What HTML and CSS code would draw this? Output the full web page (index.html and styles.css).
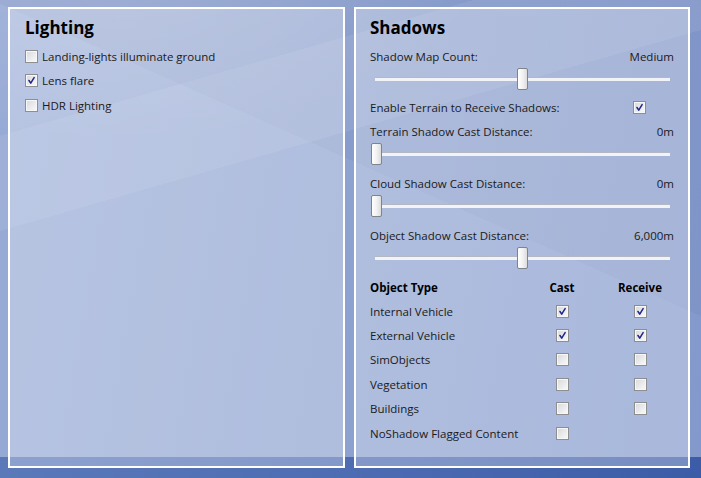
FILE: index.html
```html
<!DOCTYPE html>
<html>
<head>
<meta charset="utf-8">
<link rel="stylesheet" href="styles.css">
</head>
<body>
<div class="screen">
  <div class="swoosh"></div>
  <div class="band"></div>
  <div class="panels">
    <section class="panel lighting">
      <h2 class="title">Lighting</h2>
      <div class="check-row"><span class="cb"></span><span>Landing-lights illuminate ground</span></div>
      <div class="check-row"><span class="cb on"><svg viewBox="0 0 13 13"><path d="M3.5 6.5 L5.6 9.6 L9.6 3" /></svg></span><span>Lens flare</span></div>
      <div class="check-row"><span class="cb"></span><span>HDR Lighting</span></div>
    </section>
    <section class="panel shadows">
      <h2 class="title">Shadows</h2>
      <div class="label-row"><span>Shadow Map Count:</span><span>Medium</span></div>
      <div class="slider"><div class="track"></div><div class="thumb" style="left:147px"></div></div>
      <div class="label-row terrain"><span>Enable Terrain to Receive Shadows:</span><span class="cb on"><svg viewBox="0 0 13 13"><path d="M3.5 6.5 L5.6 9.6 L9.6 3" /></svg></span></div>
      <div class="label-row"><span>Terrain Shadow Cast Distance:</span><span>0m</span></div>
      <div class="slider"><div class="track"></div><div class="thumb" style="left:1px"></div></div>
      <div class="label-row"><span>Cloud Shadow Cast Distance:</span><span>0m</span></div>
      <div class="slider"><div class="track"></div><div class="thumb" style="left:1px"></div></div>
      <div class="label-row"><span>Object Shadow Cast Distance:</span><span>6,000m</span></div>
      <div class="slider"><div class="track"></div><div class="thumb" style="left:147px"></div></div>
      <div class="table">
        <div class="trow head"><span class="name">Object Type</span><span class="col">Cast</span><span class="col">Receive</span></div>
        <div class="trow"><span class="name">Internal Vehicle</span><span class="col"><span class="cb on"><svg viewBox="0 0 13 13"><path d="M3.5 6.5 L5.6 9.6 L9.6 3" /></svg></span></span><span class="col"><span class="cb on"><svg viewBox="0 0 13 13"><path d="M3.5 6.5 L5.6 9.6 L9.6 3" /></svg></span></span></div>
        <div class="trow"><span class="name">External Vehicle</span><span class="col"><span class="cb on"><svg viewBox="0 0 13 13"><path d="M3.5 6.5 L5.6 9.6 L9.6 3" /></svg></span></span><span class="col"><span class="cb on"><svg viewBox="0 0 13 13"><path d="M3.5 6.5 L5.6 9.6 L9.6 3" /></svg></span></span></div>
        <div class="trow"><span class="name">SimObjects</span><span class="col"><span class="cb"></span></span><span class="col"><span class="cb"></span></span></div>
        <div class="trow"><span class="name">Vegetation</span><span class="col"><span class="cb"></span></span><span class="col"><span class="cb"></span></span></div>
        <div class="trow"><span class="name">Buildings</span><span class="col"><span class="cb"></span></span><span class="col"><span class="cb"></span></span></div>
        <div class="trow"><span class="name">NoShadow Flagged Content</span><span class="col"><span class="cb"></span></span><span class="col"></span></div>
      </div>
    </section>
  </div>
</div>
</body>
</html>
```
FILE: styles.css
```css
* { box-sizing: border-box; }
html, body { margin: 0; padding: 0; }
body {
  width: 701px;
  height: 478px;
  overflow: hidden;
  font-family: "Open Sans", "Noto Sans", sans-serif;
  font-size: 11.5px;
  color: #1a1a1a;
}
.screen {
  position: relative;
  width: 701px;
  height: 478px;
  background:
    radial-gradient(ellipse 520px 260px at 120px -40px, rgba(255,255,255,0.16), rgba(255,255,255,0) 70%),
    linear-gradient(100deg, #98abd6 0%, #8ea2d0 50%, #8399cc 100%);
  overflow: hidden;
}
.swoosh {
  position: absolute;
  left: 0; top: 0; right: 0; bottom: 0;
  background:
    linear-gradient(-16deg, rgba(255,255,255,0) 0 66%, rgba(255,255,255,0.07) 66% 80%, rgba(255,255,255,0) 80%),
    linear-gradient(24deg, rgba(0,20,80,0) 0 60%, rgba(0,20,80,0.04) 60%);
}
.band {
  position: absolute;
  left: 0; right: 0; bottom: 0;
  height: 21px;
  background: linear-gradient(90deg, #5b79b9 0%, #4d6cb2 50%, #3c5ca7 100%);
}
.panels {
  position: relative;
  display: flex;
  gap: 9px;
  padding: 7px 0 0 8px;
}
.panel {
  height: 461px;
  border: 2px solid #fff;
  background: rgba(255,255,255,0.3);
}
.lighting { width: 337px; padding: 8px 14px 0 15px; }
.shadows { width: 336px; padding: 8px 14px 0 14px; }
.title {
  margin: 0;
  font-size: 17px;
  font-weight: 700;
  line-height: 22px;
  height: 27px;
  color: #000;
}
.check-row {
  display: flex;
  align-items: center;
  gap: 4px;
  height: 24.5px;
}
.cb {
  position: relative;
  display: inline-block;
  flex: none;
  width: 13px;
  height: 13px;
  border: 1px solid #8c8e91;
  background: linear-gradient(135deg, #d6d8db 0%, #f4f4f4 80%);
  box-shadow: inset 0 0 0 1px #f7f7f7;
}
.cb svg {
  position: absolute;
  left: 0; top: 0;
  width: 11px; height: 11px;
}
.cb svg path {
  fill: none;
  stroke: #21258a;
  stroke-width: 1.8;
  stroke-linecap: round;
  stroke-linejoin: round;
}
.label-row {
  display: flex;
  justify-content: space-between;
  align-items: center;
  height: 24px;
}
.label-row.terrain { height: 23px; padding-right: 28px; }
.slider {
  position: relative;
  height: 28px;
}
.track {
  position: absolute;
  left: 5px; right: 4px; top: 9px;
  height: 4px;
  border-top: 1px solid #b3b8c2;
  background: #f2f3f6;
}
.thumb {
  position: absolute;
  top: 0;
  width: 11px;
  height: 22px;
  border: 1px solid #7f838a;
  border-radius: 2px;
  background: linear-gradient(90deg, #ffffff 0%, #f2f2f2 50%, #dcdcdc 100%);
}
.trow {
  display: flex;
  align-items: center;
  height: 24.4px;
}
.trow.head { font-weight: 700; color: #000; height: 24px; }
.trow .name { flex: none; width: 153px; }
.trow .col { flex: none; width: 78px; display: flex; justify-content: center; }
```
